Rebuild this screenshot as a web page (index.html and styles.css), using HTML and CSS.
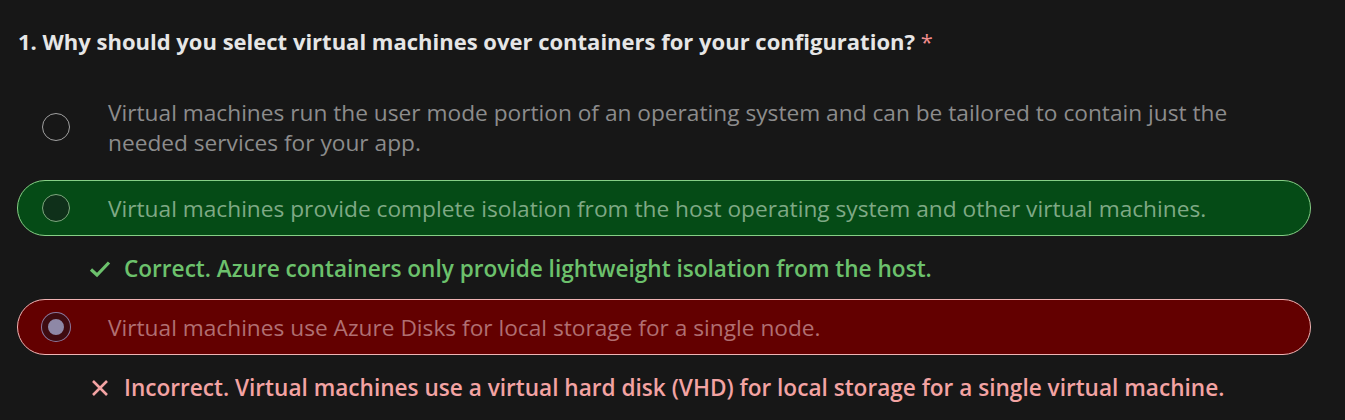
FILE: index.html
```html
<!DOCTYPE html>
<html>
<head>
<meta charset="utf-8">
<link rel="stylesheet" href="styles.css">
</head>
<body>
<div class="quiz">
  <h2 class="question">1. Why should you select virtual machines over containers for your configuration? <span class="req">*</span></h2>
  <div class="options">
    <div class="option">
      <span class="radio"></span>
      <span class="label">Virtual machines run the user mode portion of an operating system and can be tailored to contain just the needed services for your app.</span>
    </div>
    <div class="option correct">
      <span class="radio"></span>
      <span class="label">Virtual machines provide complete isolation from the host operating system and other virtual machines.</span>
    </div>
    <div class="feedback good">
      <svg class="icon" viewBox="0 0 22 22" width="22" height="22"><path d="M2 11.5 L8 17 L20 4.5" fill="none" stroke="currentColor" stroke-width="3.2"/></svg>
      <span>Correct. Azure containers only provide lightweight isolation from the host.</span>
    </div>
    <div class="option wrong">
      <span class="radio checked"></span>
      <span class="label">Virtual machines use Azure Disks for local storage for a single node.</span>
    </div>
    <div class="feedback bad">
      <svg class="icon" viewBox="0 0 22 22" width="22" height="22"><path d="M4 4 L18 18 M18 4 L4 18" fill="none" stroke="currentColor" stroke-width="2.6"/></svg>
      <span>Incorrect. Virtual machines use a virtual hard disk (VHD) for local storage for a single virtual machine.</span>
    </div>
  </div>
</div>
</body>
</html>
```
FILE: styles.css
```css
html, body {
  margin: 0;
  padding: 0;
  background: #171717;
}
body {
  font-family: "Open Sans", "Noto Sans", sans-serif;
}
.quiz {
  padding: 27px 34px 0 17px;
}
.question {
  margin: 0 0 29px 1px;
  font-size: 22px;
  line-height: 28px;
  font-weight: 700;
  color: #e6e6e6;
}
.req {
  color: #f08c8c;
  font-weight: 400;
}
.options {
  display: flex;
  flex-direction: column;
}
.option {
  display: flex;
  align-items: center;
  gap: 38px;
  padding: 13px 24px 11px;
  border: 1px solid transparent;
  border-radius: 28px;
  margin-bottom: 10px;
}
.radio {
  margin-top: -2px;
}
.label {
  font-size: 22.7px;
  line-height: 30px;
  color: #8c8c8c;
}
.radio {
  flex: none;
  width: 28px;
  height: 28px;
  box-sizing: border-box;
  border-radius: 50%;
  border: 1px solid #a0a0a0;
}
.correct {
  background: #054b16;
  border-color: #86cf86;
}
.correct .label {
  color: #7fa985;
}
.correct .radio {
  background: #0f301a;
  border-color: #7ea87e;
}
.wrong {
  background: #630000;
  border-color: #f0b4b4;
  margin-bottom: 0;
}
.wrong .label {
  color: #b06f72;
}
.radio.checked {
  border: 6px solid #3f0b10;
  background: #8e88a6;
  box-shadow: 0 0 0 1px #8a7aa0;
}
.feedback {
  display: flex;
  align-items: center;
  gap: 13px;
  padding-left: 72px;
  font-size: 22.6px;
  line-height: 30px;
  font-weight: 600;
}
.feedback .icon { flex: none; }
.good {
  color: #6cc16c;
  margin: 8px 0 15px;
}
.bad {
  color: #f3a3a3;
  margin: 18px 0 0;
}
```
